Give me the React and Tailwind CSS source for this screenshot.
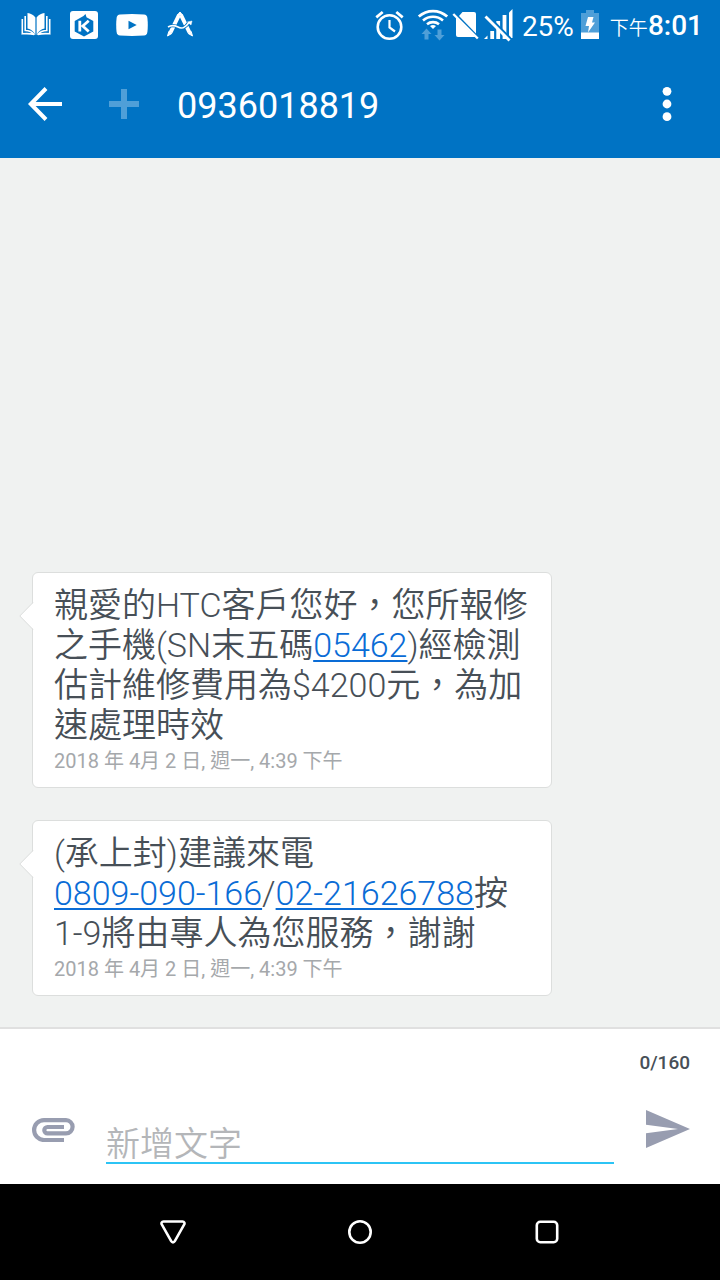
import { Fragment, useState } from 'react';

const messages = [
  {
    id: 1,
    body: [
      { text: '親愛的HTC客戶您好，您所報修之手機(SN末五碼' },
      { text: '05462', href: 'tel:05462' },
      { text: ')經檢測估計維修費用為$4200元，為加速處理時效' },
    ],
    time: '2018 年 4月 2 日, 週一, 4:39 下午',
  },
  {
    id: 2,
    body: [
      { text: '(承上封)建議來電' },
      { text: '0809-090-166', href: 'tel:0809090166' },
      { text: '/' },
      { text: '02-21626788', href: 'tel:0221626788' },
      { text: '按' },
      { text: '1-9', nowrap: true },
      { text: '將由專人為您服務，謝謝' },
    ],
    time: '2018 年 4月 2 日, 週一, 4:39 下午',
  },
];

// Status bar icons
const BookIcon = () => (
  <svg className="w-[31px] h-7" viewBox="0 0 31 28" fill="#fff">
    <path d="M14.400 24V6.500C12.700 4 9.700 2.300 6.500 2v15.500c3.500.8 6.200 3 7.900 6.500z" />
    <path d="M15.600 24V6.500C17.300 4 20.300 2.300 23.500 2v15.500c-3.500.8-6.200 3-7.900 6.500z" />
    <path
      d="M4.200 5v14.500c4 0 7 1.500 9.300 4.200M25.800 5v14.500c-4 0-7 1.500-9.300 4.200M1.300 8v14.800c4-.4 8-.3 12 .6M28.700 8v14.800c-4-.4-8-.3-12 .6"
      fill="none"
      stroke="#fff"
      strokeWidth="1.600"
    />
  </svg>
);

const KIcon = () => (
  <svg className="w-7 h-7" viewBox="0 0 28 28">
    <rect width="28" height="28" rx="3" fill="#fff" />
    <path d="M13.500 5 15.500 3l1 3.300 6.800 3.700v10.500L14 25.500 4.700 20.500V10z" fill="#0073c4" />
    <path d="M9.800 9.700v10.800M18.700 9.700 12.800 15l5.900 5.500" fill="none" stroke="#fff" strokeWidth="2.800" />
  </svg>
);

const VideoIcon = () => (
  <svg className="w-8 h-7" viewBox="0 0 32 28">
    <path d="M4 3.500Q16 2.600 28 3.500q3 .3 3.400 3.500.8 7 0 14-.4 3.200-3.400 3.500-12 .8-24 0Q1 24.200.6 21-.2 14 .6 7 1 3.800 4 3.500z" fill="#fff" />
    <path d="M12.500 9.800v8.400l8.200-4.200z" fill="#0073c4" />
  </svg>
);

const CompassIcon = () => (
  <svg className="w-7 h-7" viewBox="0 0 28 28" fill="none" stroke="#fff">
    <path d="M13 4 4.500 21.500M15 4l8.500 17.500" strokeWidth="4" />
    <path d="m11.500 4 2.500-3 2.500 3z" fill="#fff" strokeWidth="1" />
    <path d="M2.800 20.500 1.500 25l4.300-2.500zM25.200 20.500 26.500 25l-4.300-2.500z" fill="#fff" strokeWidth="1" />
    <path d="M2 16c4-2.500 7-1.500 10 0 4 2.300 7 1 11-4.500" stroke="#0073c4" strokeWidth="3.400" />
    <path d="M2 16c4-2.500 7-1.500 10 0 4 2.300 7 1 11-4.500" strokeWidth="1.600" />
    <path d="m21.500 11 4.500-1-1 4z" fill="#fff" strokeWidth=".5" />
  </svg>
);

const AlarmIcon = () => (
  <svg className="w-[30px] h-8" viewBox="0 0 30 32" fill="none" stroke="#fff">
    <circle cx="14.500" cy="18" r="11.800" strokeWidth="2.600" />
    <path d="M14.500 11v7.500l5.500 4" strokeWidth="2.200" />
    <path d="m1.300 8.300 6.400-5.300M27.700 8.300l-6.400-5.300" strokeWidth="2.800" />
  </svg>
);

const WifiIcon = () => (
  <svg className="w-8 h-8" viewBox="0 0 32 32" fill="none" stroke="#fff">
    <path d="M1.800 7.500C10 .2 22 .2 30.200 7.500" strokeWidth="2.800" />
    <path d="M6 11.500c5.800-5 14.200-5 20 0" strokeWidth="2.600" />
    <path d="M10 15.200c3.400-2.800 8.600-2.800 12 0" strokeWidth="2.600" />
    <path d="M13 17a5 5 0 0 1 6 0l-3 3z" fill="#fff" stroke="none" />
    <path d="M9.500 19.500 14.500 25h-3v5.500H7.500V25h-3zM22.500 31.500l-5-5.500h3v-5.500h4V26h3z" fill="#4f9fd8" stroke="none" />
  </svg>
);

const NoSimIcon = () => (
  <svg className="w-7 h-8" viewBox="0 0 28 32">
    <path d="M10.500 3H22q2 0 2 2v19.500L7 7z" fill="#fff" />
    <path d="M4 8.500 23.500 28H6q-2 0-2-2z" fill="#fff" />
    <path d="m1.300 5 24.500 24.500" stroke="#fff" strokeWidth="2.400" />
  </svg>
);

const NoSignalIcon = () => (
  <svg className="w-8 h-[34px]" viewBox="0 0 32 34" fill="none" stroke="#fff">
    <path d="M1 31l3.500-3.500V31z" fill="#fff" stroke="none" />
    <path d="M9.200 31v-8M15.200 31V13M21.500 31V7" strokeWidth="3.800" />
    <path d="M26 30V4.500L29.500 1v29z" fill="#fff" stroke="none" />
    <path d="m4 7 23.500 23.500" stroke="#0073c4" strokeWidth="2.400" />
    <path d="m2.500 8.500 24 24" strokeWidth="2.800" />
  </svg>
);

const BatteryIcon = () => (
  <svg className="w-5 h-8" viewBox="0 0 20 32">
    <path d="M6 1h8v3h5v26H1V4h5z" fill="#4f9fd8" />
    <path d="M1 23.500h18V30H1z" fill="#fff" />
    <path d="M8 8h5.500l-1.500 5.500h3L8 23.500l1-6.500H5.500z" fill="#fff" />
  </svg>
);

function StatusBar() {
  return (
    <div className="flex items-center h-[50px] pl-[21px] pr-[17px]">
      <div className="flex items-center gap-[18px]">
        <BookIcon />
        <KIcon />
        <VideoIcon />
        <CompassIcon />
      </div>
      <div className="flex items-center ml-auto">
        <AlarmIcon />
        <div className="flex items-center gap-[3px] ml-3">
          <WifiIcon />
          <NoSimIcon />
          <NoSignalIcon />
        </div>
        <span className="ml-[7px] mr-1.5 pt-1 text-[28px] leading-8">25%</span>
        <BatteryIcon />
        <span className="flex items-baseline ml-2.5 pt-1 leading-8">
          <span className="text-[19px] font-[350]">下午</span>
          <span className="text-[28px] font-medium">8:01</span>
        </span>
      </div>
    </div>
  );
}

function AppBar() {
  return (
    <div className="flex items-center h-[108px] pl-[27px] pr-[35px]">
      <button type="button" aria-label="返回">
        <svg className="w-9 h-9" viewBox="0 0 36 36" fill="none" stroke="#fff" strokeWidth="4">
          <path d="M35 18H5M19 2.500 3.800 18 19 33.500" />
        </svg>
      </button>
      <button type="button" aria-label="新增聯絡人" className="ml-[46px]">
        <svg className="w-[30px] h-[30px]" viewBox="0 0 30 30" fill="#4f9fd8">
          <path d="M12 0h6v12h12v6H18v12h-6V18H0v-6h12z" />
        </svg>
      </button>
      <h1 className="ml-[38px] pt-1 text-4xl">0936018819</h1>
      <button type="button" aria-label="更多選項" className="ml-auto">
        <svg className="w-9 h-9" viewBox="0 0 36 36" fill="#fff">
          <circle cx="18" cy="5.300" r="4.400" />
          <circle cx="18" cy="18" r="4.400" />
          <circle cx="18" cy="30.700" r="4.400" />
        </svg>
      </button>
    </div>
  );
}

function MessagePart({ part }) {
  if (part.href) {
    return (
      <a
        href={part.href}
        className="whitespace-nowrap text-[#0a6cd6] underline decoration-2 underline-offset-[3px]"
      >
        {part.text}
      </a>
    );
  }
  if (part.nowrap) {
    return <span className="whitespace-nowrap">{part.text}</span>;
  }
  return <Fragment>{part.text}</Fragment>;
}

function MessageBubble({ message }) {
  return (
    <li className="relative px-[21px] pt-3 pb-2.5 bg-white border border-[#dcdedd] rounded-md">
      <svg className="absolute -left-[14px] top-[29px] w-[15px] h-7" viewBox="0 0 15 28">
        <path d="M15 0 1 14l14 14z" fill="#fff" />
        <path d="M14 .5.800 14 14 27.500" fill="none" stroke="#dcdedd" />
      </svg>
      <p className="text-[34px] leading-10 font-[350] text-[#474f57]">
        {message.body.map((part, index) => (
          <MessagePart key={index} part={part} />
        ))}
      </p>
      <time className="block text-xl leading-8 text-[#a5a8ab]">{message.time}</time>
    </li>
  );
}

function Composer() {
  const [text, setText] = useState('');

  return (
    <form
      className="bg-white border-t-2 border-[#e0e0e0] pt-5 pb-5 pl-8 pr-[30px]"
      onSubmit={(e) => e.preventDefault()}
    >
      <p className="text-right text-[19px] leading-7 font-medium text-[#474f57]">{text.length}/160</p>
      <div className="flex items-start mt-7">
        <button type="button" aria-label="附加檔案" className="mt-[13px]">
          <svg className="w-[43px] h-6" viewBox="0 0 43 24" fill="none" stroke="#989db0" strokeWidth="4.200">
            <path d="M32 22H12a9.900 9.900 0 0 1 0-19.800h22a6.600 6.600 0 0 1 0 13.200H15.500a3.200 3.200 0 0 1 0-6.400H32" />
          </svg>
        </button>
        <input
          type="text"
          aria-label="新增文字"
          placeholder="新增文字"
          maxLength={160}
          value={text}
          onChange={(e) => setText(e.target.value)}
          className="flex-1 min-w-0 h-[59px] pt-5 ml-[31px] mr-8 text-[34px] font-[350] text-[#474f57] placeholder:text-[#b4b6b9] border-b-2 border-[#2cc4f5] outline-none"
        />
        <button type="submit" aria-label="傳送" className="mt-[5px]">
          <svg className="w-11 h-[38px]" viewBox="0 0 44 38" fill="#989db0">
            <path d="M0 0l44 19L0 38V23.300L32 19 0 14.700z" />
          </svg>
        </button>
      </div>
    </form>
  );
}

function NavBar() {
  return (
    <nav className="flex items-center justify-center gap-[161px] h-24 bg-black">
      <button type="button" aria-label="返回">
        <svg className="w-[26px] h-[26px]" viewBox="0 0 26 26" fill="none" stroke="#fff" strokeWidth="2.600">
          <path d="M3.500 2.500h19c1.800 0 2.500 1.700 1.600 3.200l-9.300 16.500c-.9 1.500-2.700 1.500-3.600 0L1.900 5.700C1 4.200 1.700 2.500 3.500 2.500z" />
        </svg>
      </button>
      <button type="button" aria-label="主畫面">
        <svg className="w-[26px] h-[26px]" viewBox="0 0 26 26" fill="none" stroke="#fff" strokeWidth="2.600">
          <circle cx="13" cy="13" r="10.700" />
        </svg>
      </button>
      <button type="button" aria-label="最近使用">
        <svg className="w-[26px] h-[26px]" viewBox="0 0 26 26" fill="none" stroke="#fff" strokeWidth="2.600">
          <rect x="2.800" y="2.800" width="20.400" height="20.400" rx="3.500" />
        </svg>
      </button>
    </nav>
  );
}

export default function App() {
  return (
    <div
      lang="zh-Hant"
      className="flex flex-col min-h-screen bg-[#f0f2f1] font-[Roboto,'Noto_Sans_CJK_TC',sans-serif]"
    >
      <header className="bg-[#0073c4] text-white">
        <StatusBar />
        <AppBar />
      </header>
      <main className="flex flex-col flex-1 justify-end pl-8 pr-[168px] pt-8 pb-[31px]">
        <ul className="flex flex-col gap-8">
          {messages.map((message) => (
            <MessageBubble key={message.id} message={message} />
          ))}
        </ul>
      </main>
      <Composer />
      <NavBar />
    </div>
  );
}
